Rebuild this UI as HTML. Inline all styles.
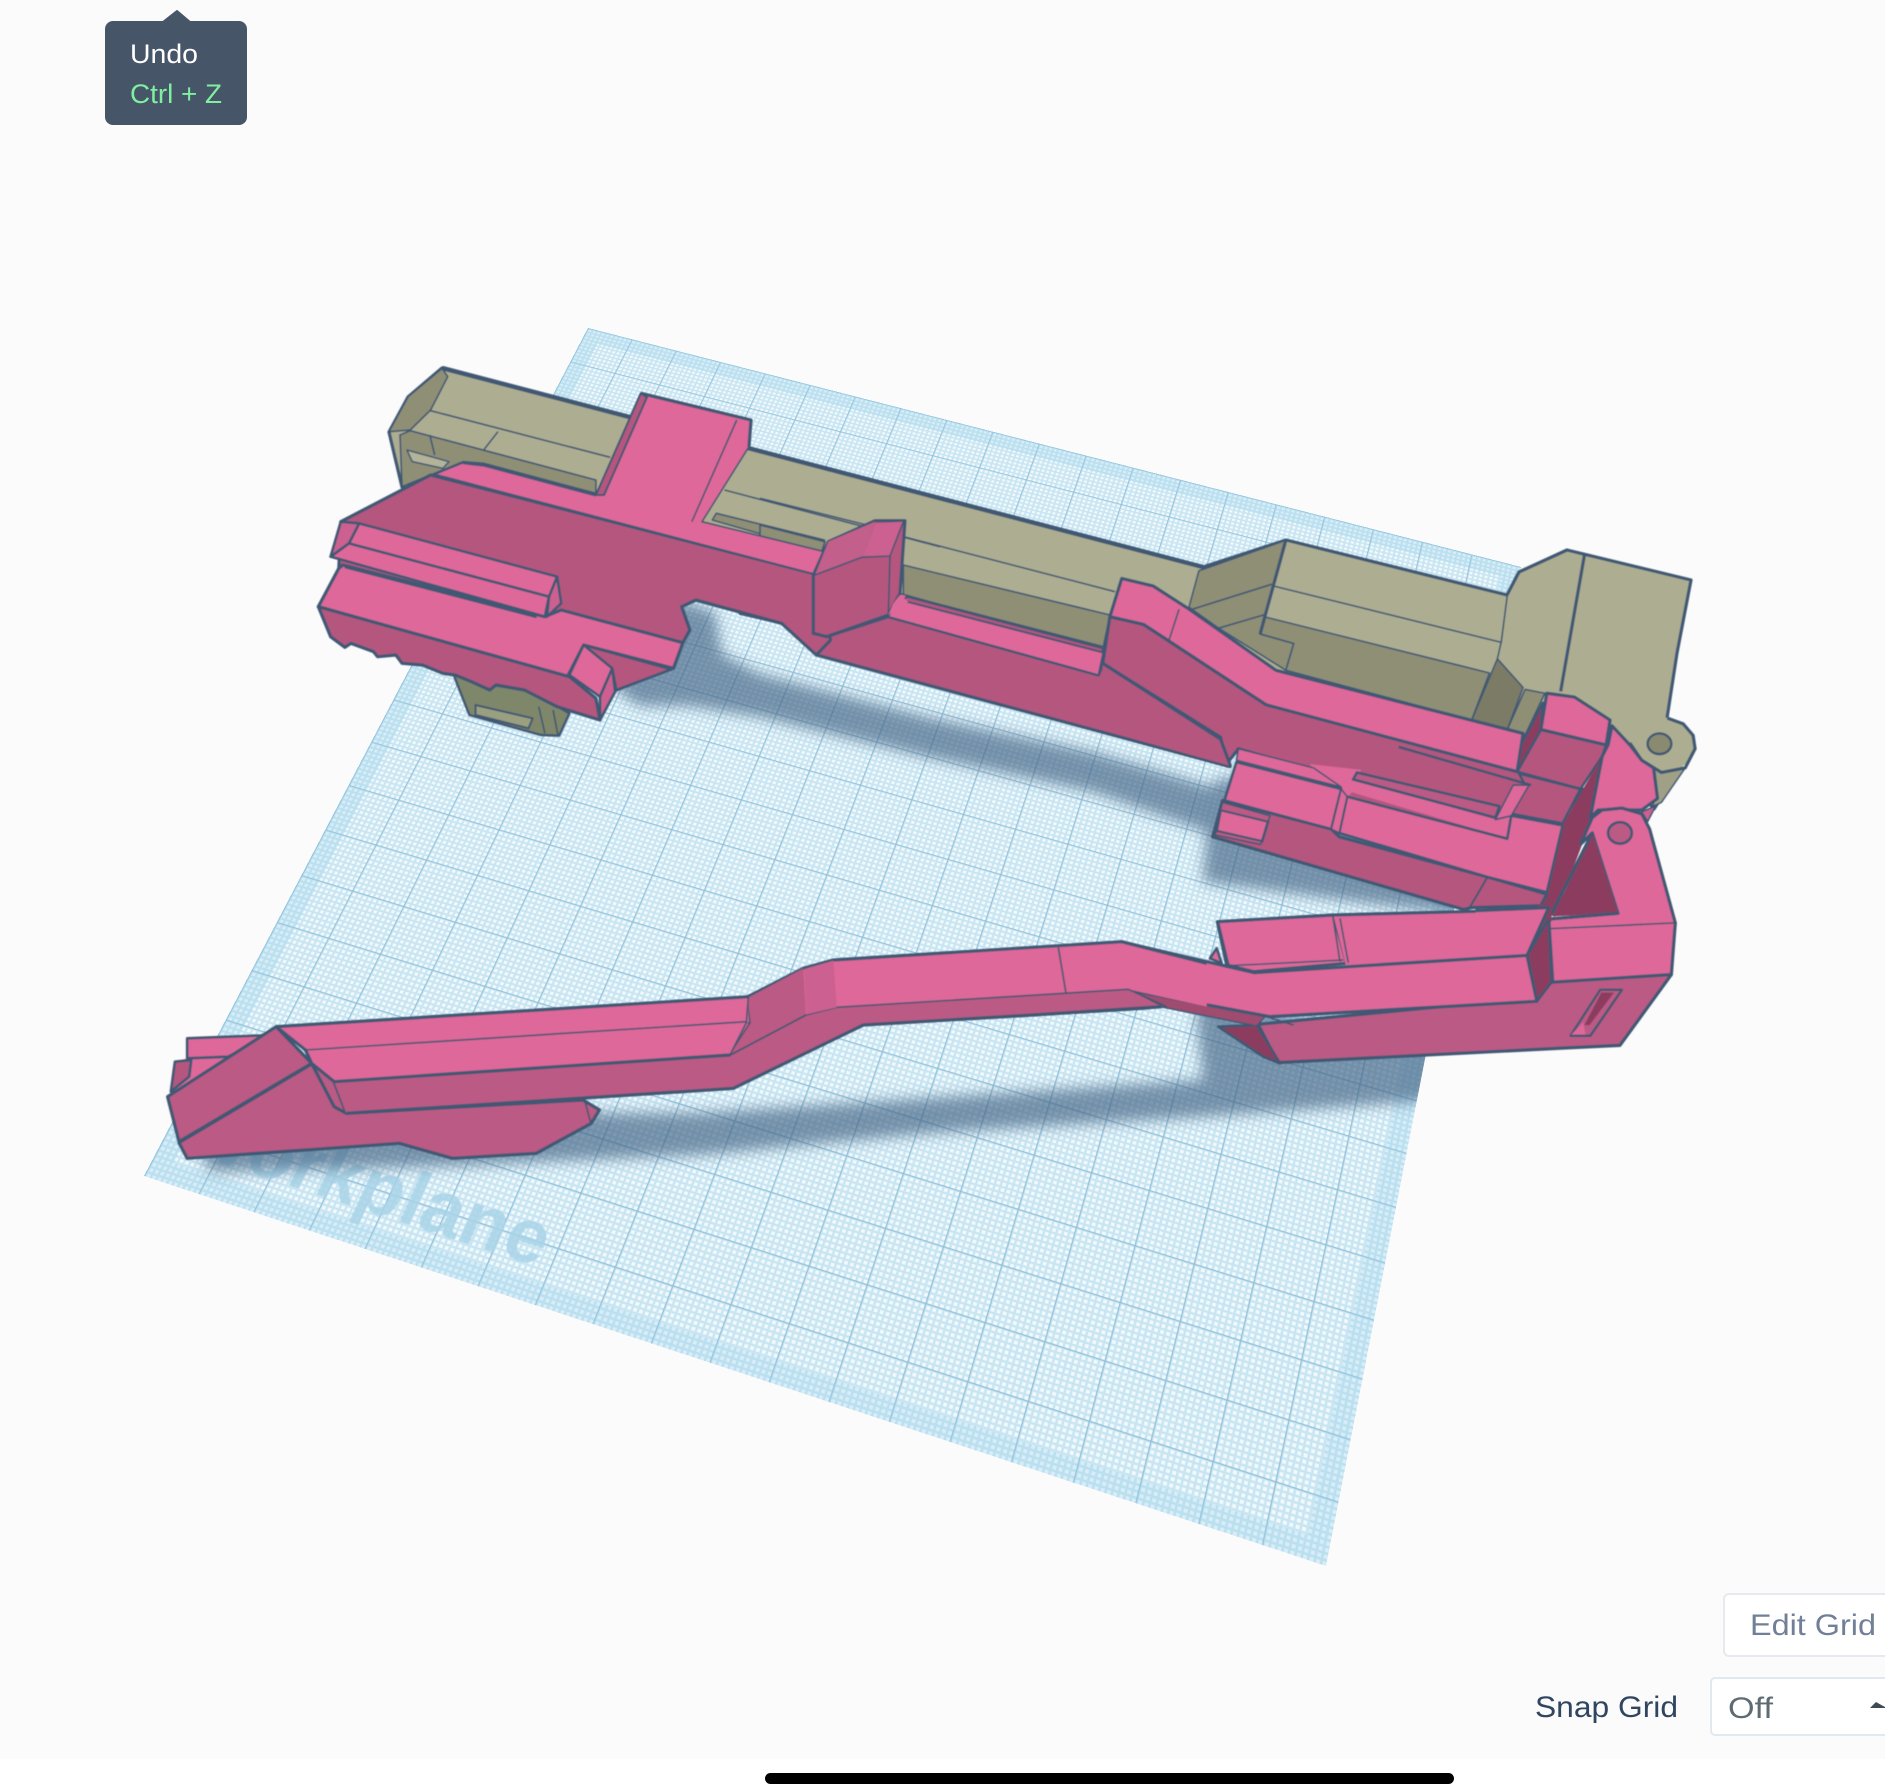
<!DOCTYPE html>
<html>
<head>
<meta charset="utf-8">
<title>Workplane</title>
<style>
html,body{margin:0;padding:0;background:#fff}
#stage{position:relative;width:1885px;height:1788px;overflow:hidden;background:#fff}
#bg{position:absolute;left:0;top:0;width:1885px;height:1759px;background:#fbfbfb}
#plane{position:absolute;left:0;top:0;width:1000px;height:1000px;overflow:hidden;transform-origin:0 0;
transform:matrix3d(.83453,.20229,0,-.00006474,-.47587,.5877,0,-.00022134,0,0,1,0,588,328,0,1);
background-color:#f2f9fc;
background-image:linear-gradient(to right,#8fc0da 1.3px,transparent 1.3px),linear-gradient(to bottom,#8fc0da 1.3px,transparent 1.3px),linear-gradient(to right,#c8e5f2 2.1px,transparent 2.1px),linear-gradient(to bottom,#c8e5f2 2.1px,transparent 2.1px);
background-size:50px 50px,50px 50px,5px 5px,5px 5px;
box-shadow:inset 0 0 0 18px rgba(150,210,235,.28)}
#wp{position:absolute;left:15px;top:908px;font:bold 64px/80px "Liberation Sans",sans-serif;color:#a9d4e8;opacity:.85;white-space:nowrap}
svg{position:absolute;left:0;top:0}
svg polygon,svg polyline,svg line,svg ellipse{vector-effect:non-scaling-stroke;stroke-linejoin:round}
.o{stroke:#3f5873;stroke-width:2.6}
.t{stroke:#3f5873;stroke-width:1.6;fill:none}
.k{stroke:#3f5873;stroke-width:3.2;fill:none}
.n{stroke:none}
.gl{fill:#adad91}.gm{fill:#8f8f76}.gd{fill:#7c7c66}
.pl{fill:#de6899}.pd{fill:#b5567f}.pm{fill:#bb5a84}.pp{fill:#8c3e5e}.pc{fill:#cc6090}
text{font-family:"Liberation Sans",sans-serif}
</style>
</head>
<body>
<div id="stage">
<div id="bg"></div>
<div id="plane"><div id="wp">Workplane</div></div>
<svg width="1885" height="1788" viewBox="0 0 1885 1788" xmlns="http://www.w3.org/2000/svg">
<defs>
<clipPath id="pc"><polygon points="588,328 1521,567 1326,1566 144,1176"/></clipPath>
<filter id="b" x="-10%" y="-20%" width="120%" height="140%"><feGaussianBlur stdDeviation="7"/></filter>
<filter id="s" x="-2%" y="-2%" width="104%" height="104%"><feGaussianBlur stdDeviation=".55"/></filter>
</defs>

<!-- shadows -->
<g clip-path="url(#pc)">
<g filter="url(#b)" fill="#3d5f82" fill-opacity=".64">
<polygon points="680,600 715,612 722,654 760,674 927,717 1093,752 1215,788 1207,832 1093,792 927,757 760,717 688,706 640,706 615,690 640,640"/>
<polygon points="1215,780 1207,826 1203,882 1460,915 1510,830 1300,770"/>
<polygon points="200,1155 212,1172 457,1166 538,1162 700,1155 933,1133 1200,1117 1440,1100 1450,1040 1200,1000 1197,1020 1203,1080 867,1102 700,1113 600,1113 500,1100 200,1100"/>
</g>
</g>

<g filter="url(#s)">
<!-- GOLD BACK BODY -->
<polygon class="gl k" points="442,368 1203,567 1286,540 1507,595 1519,572 1567,550 1691,580 1677,653 1667,718 1660,745 1681,767 1654,809 1630,780 1560,760 1250,680 1000,650 760,600 600,550 402,487 389,432 408,397"/>
<polyline points="442,368 1203,567" style="fill:none;stroke:#3f5873;stroke-width:4.5"/>

<!-- gold lower foot -->
<g transform="translate(300 340) scale(.40816 .33333)">
<polygon points="375,1000 415,1125 590,1185 635,1187 660,1120 560,1050" style="fill:#7f876a;stroke:#3f5873;stroke-width:2.4"/>
<polygon points="430,1095 570,1135 560,1165 430,1125" style="fill:#9a9f80;stroke:#3f5873;stroke-width:2"/>
<line class="t" x1="585" y1="1100" x2="600" y2="1180"/>
<line class="t" x1="620" y1="1110" x2="632" y2="1185"/>
</g>

<!-- gold left details -->
<g transform="translate(300 340) scale(.40816 .33333)">
<polygon class="gm t" points="348,85 362,110 320,210 270,270 218,275 265,170"/>
<polygon class="gm t" points="245,285 270,272 725,420 725,460 450,370 400,365 250,440"/>
<polygon points="262,330 365,365 350,385 275,365" style="fill:#b3b399;stroke:#3f5873;stroke-width:1.5"/>
<line class="t" x1="320" y1="212" x2="760" y2="352"/>
<line class="t" x1="485" y1="275" x2="450" y2="330"/>
<line class="t" x1="318" y1="285" x2="330" y2="345"/>
<line class="t" x1="1040" y1="450" x2="1568" y2="620"/>
<polygon class="gm t" points="1010,540 1020,520 1285,600 1280,635"/>
</g>
<g transform="translate(760 480) scale(.33333)">
<line class="t" x1="0" y1="55" x2="320" y2="135"/>
<line class="t" x1="430" y1="170" x2="1065" y2="335"/>
<polygon class="gm t" points="430,255 1050,405 1030,500 430,345"/>
<polygon class="gm t" points="0,135 195,185 185,215 0,170"/>
</g>
<!-- gold right details -->
<g transform="translate(1100 500) scale(.3954 .3827)">
<polygon class="gm t" points="250,185 470,105 440,220 405,350 490,375 470,445 300,335 225,280"/>
<line class="t" x1="235" y1="285" x2="435" y2="220"/>
<line class="t" x1="300" y1="335" x2="415" y2="300"/>
<polygon class="gm t" points="415,305 985,452 940,575 470,445 490,375 405,350"/>
<line class="t" x1="440" y1="225" x2="1015" y2="372"/>
<polygon class="gd t" points="1005,415 1070,490 1030,600 940,575"/>
<polygon class="gm t" points="1075,495 1125,505 1075,615 1030,600"/>
<polyline class="t" points="1060,185 1030,250 1015,370 1005,415"/>
<line x1="1225" y1="145" x2="1165" y2="500" style="stroke:#3f5873;stroke-width:3.2"/>
<line x1="470" y1="105" x2="405" y2="350" style="stroke:#3f5873;stroke-width:3.2"/>
<polygon points="1400,710 1480,700 1420,790 1400,800" style="fill:#a0a086;stroke:#3f5873;stroke-width:1.5"/>
<ellipse cx="1420" cy="640" rx="85" ry="72" class="gl n"/>
<polyline class="k" points="1435,570 1475,585 1500,615 1505,650 1480,700 1420,712 1370,680 1340,635"/>
<ellipse cx="1415" cy="637" rx="30" ry="27" style="fill:#8a8a70;stroke:#3f5873;stroke-width:2.4"/>
</g>

<!-- PINK FRONT ARM - upper -->
<g transform="translate(760 480) scale(.33333)">
<polygon class="pd k" points="-60,400 -60,240 160,285 160,460 200,470 385,410 1015,585 1030,550 1385,785 1410,860 170,525 70,430"/>
<polygon class="pl t" points="420,340 1030,515 1015,585 385,410"/>
<polygon points="440,350 1028,505 1028,517 430,362" style="fill:#b5567f;stroke:#3f5873;stroke-width:2"/>
<line x1="1030" y1="550" x2="1385" y2="785" style="stroke:#3f5873;stroke-width:3.2"/>
</g>

<g transform="translate(300 340) scale(.40816 .33333)">
<polygon class="pd k" points="100,545 320,405 1262,702 1300,900 1265,945 1180,850 970,780 935,800 955,870 938,908 910,985 775,1050 700,900 300,800 95,690"/>
<!-- T top -->
<polygon class="pl t" points="330,403 400,368 450,375 725,465 835,160 1105,240 1100,320 985,545 1285,635 1260,702"/>
<polygon class="pd" style="stroke:#3f5873;stroke-width:2" points="835,160 725,465 745,465 850,172"/>
<line class="t" x1="1070" y1="240" x2="960" y2="545"/>
<polyline class="k" points="835,160 1105,240 1100,320"/>
<polyline class="k" points="400,368 450,375 725,465"/>
<!-- lower-left light top -->
<polygon class="pl k" points="95,685 45,800 655,1010 695,915 915,985 938,908 640,810 600,830 105,675"/>
<polygon class="pd o" points="765,985 775,1050 910,988 695,915"/>
<polygon class="pd k" points="45,800 75,890 110,922 125,910 180,935 190,950 235,945 250,970 300,975 350,1000 380,1005 420,1025 465,1050 480,1035 550,1050 630,1100 735,1140 725,1075 660,1010"/>
<polygon class="pl o" points="695,915 765,985 735,1070 660,1005"/>
<polygon class="pc o" points="765,985 772,1055 735,1140 735,1070"/>
<!-- rail -->
<polygon class="pl o" points="145,550 630,710 610,790 120,610"/>
<polygon class="pl o" points="120,610 610,770 600,830 75,650"/>
<polygon class="pc o" points="630,710 640,790 605,830 610,770"/>
<polygon class="pc o" points="145,550 100,545 75,650 120,610"/>
<line x1="110" y1="680" x2="580" y2="830" style="stroke:#3f5873;stroke-width:3.2"/>
</g>

<!-- bump block -->
<g transform="translate(760 480) scale(.33333)">
<polygon class="pd k" points="160,285 205,185 345,122 435,122 420,340 385,405 200,470 160,460"/>
<polygon class="pc n" points="345,130 430,125 390,228 310,228"/>
<polygon style="fill:#c25e8a" points="205,185 345,125 310,228 165,285"/>
<polyline class="t" points="165,285 305,232 390,228 430,125"/>
<line class="t" x1="390" y1="228" x2="385" y2="405"/>
<polygon class="pl n" points="420,345 445,365 385,405 400,370"/>
</g>

<!-- rising piece + right block -->
<g transform="translate(1100 500) scale(.3954 .3827)">
<polygon class="pp n" points="1170,845 1270,670 1245,830 1150,1090 1115,1065"/>
<polygon class="pd n" points="590,690 1060,790 1050,910 590,800"/>
<polygon class="pd k" points="25,305 110,325 420,535 1055,705 1220,755 1180,850 1040,820 650,715 620,730 350,650 320,690 305,620 7,427"/>
<polygon class="pd n" points="7,427 305,625 330,695 0,600"/>
<polyline points="7,427 305,625 330,695" style="fill:none;stroke:#3f5873;stroke-width:3.2"/>
<polygon class="pl k" points="55,205 135,225 225,285 445,445 1070,610 1055,710 420,535 110,325 25,305"/>
<line class="t" x1="200" y1="285" x2="175" y2="365"/>
<!-- upper right block -->
<polygon class="pd o" points="1115,600 1280,640 1270,670 1215,755 1055,710"/>
<polygon class="pl k" points="1130,505 1200,515 1290,575 1280,640 1115,600"/>
<polygon class="pp o" points="1120,530 1115,600 1055,710 1065,640"/>
<polygon class="pd o" points="1060,715 1215,755 1170,845 1040,820 1075,745"/>
<polygon class="pp n" points="1270,670 1245,800 1190,900 1195,970 1115,1060 1170,850"/>
<!-- right arm behind -->
<polygon class="pl k" points="1295,590 1340,640 1370,680 1400,700 1410,780 1370,810 1260,810 1240,830 1270,670 1285,640"/>
<polygon class="pc t" points="1370,815 1405,800 1385,840"/>
<!-- lower block tops -->
<polygon class="pd k" points="285,880 310,785 585,860 605,880 980,985 1130,1030 1115,1060 940,1065 920,1070"/>
<polygon class="pl n" points="530,690 660,705 650,745 625,780 600,770"/>
<polygon class="pl o" points="345,685 610,755 585,860 315,785"/>
<polygon class="pl t" points="350,650 540,700 610,750 345,680"/>
<polygon class="pl n" points="625,760 640,730 1000,835 1040,825 1030,885"/>
<polygon class="pl o" points="625,775 1030,885 1040,825 1170,850 1130,1025 980,985 605,870"/>
<polygon class="pl t" points="610,755 625,775 605,870 585,860"/>
<polygon class="pm o" points="640,730 650,712 1010,800 1000,830"/>
<polygon class="pl t" points="1000,835 1045,745 1085,745 1040,825"/>
<line x1="755" y1="645" x2="1090" y2="745" style="stroke:#3f5873;stroke-width:2.6"/>
<polygon class="pl o" points="305,810 425,840 410,892 295,865"/>
<polygon class="pm t" points="290,875 295,865 410,892 405,900"/>
<polygon class="pm t" points="310,790 430,825 425,840 305,810"/>
<line x1="980" y1="985" x2="935" y2="1065" style="stroke:#3f5873;stroke-width:2"/>

<!-- lower bracket -->
<polygon class="pm k" points="1145,1240 1445,1240 1315,1425 1175,1432 450,1470 400,1370 1100,1300"/>
<polygon class="pl k" points="1245,830 1270,810 1320,805 1370,820 1390,860 1455,1105 1445,1240 1145,1260 1135,1095 1310,1080 1245,870 1215,900"/>
<polygon class="pp n" points="1245,870 1310,1080 1145,1088"/>
<line class="t" x1="1140" y1="1120" x2="1455" y2="1105"/>
<line class="k" x1="1135" y1="1095" x2="1310" y2="1080"/>
<line class="k" x1="1245" y1="870" x2="1140" y2="1085"/>
<ellipse cx="1315" cy="870" rx="30" ry="28" class="pm o"/>
<polygon points="1265,1280 1320,1280 1240,1400 1190,1400" style="fill:#bb5a84;stroke:#3f5873;stroke-width:2.4"/>
<polygon class="pp n" points="1268,1287 1300,1287 1238,1372 1225,1372"/>
<polygon class="pl n" points="1192,1397 1222,1365 1228,1397"/>
<polygon class="pp n" points="1110,1058 1142,1058 1142,1100 1080,1190"/>
<polygon class="pp o" points="1135,1095 1080,1190 1105,1310 1142,1260"/>
</g>

<!-- long arm -->
<g transform="translate(1000 780) scale(.33333)">
<polygon class="pp o" points="655,740 770,735 840,850 790,830"/>
<polygon style="fill:#a04b70;stroke:#3f5873;stroke-width:1.5" points="385,630 795,710 770,738 480,680"/>
<polygon class="pl o" points="630,535 650,505 665,550"/>
<polygon class="pl k" points="652,425 1000,405 1040,550 760,575 680,555"/>
<polygon class="pl n" points="1000,405 1500,392 1500,540 1040,565"/>
<line class="t" x1="998" y1="405" x2="1020" y2="545"/>
<line class="t" x1="1020" y1="415" x2="1045" y2="548"/>
<line x1="690" y1="557" x2="1030" y2="540" style="stroke:#3f5873;stroke-width:1.5"/>
<polyline class="k" points="1000,405 1500,392"/>
<line x1="655" y1="430" x2="685" y2="555" style="stroke:#3f5873;stroke-width:2.5"/>
<polygon class="pm k" points="0,655 385,628 480,680 430,685 0,710"/>
</g>
<g transform="translate(1100 500) scale(.3954 .3827)">
<polygon class="pl n" points="950,1070 1135,1065 1080,1190 1060,1205 950,1220"/>
<polyline class="k" points="950,1073 1135,1065 1080,1190"/>
<polygon class="pl k" points="-100,1170 55,1155 390,1235 1080,1190 1105,1310 430,1350 70,1280 -100,1290"/>
<line class="t" x1="420" y1="1350" x2="490" y2="1372"/>
</g>
<g transform="translate(700 900) scale(.33333)">
<polygon class="pm n" points="0,475 85,468 318,345 410,322 1285,268 1385,320 1000,345 490,375 100,565 0,570"/>
<polyline class="k" points="1385,320 1000,345 490,375 100,565 0,570"/>
<polygon class="pl n" points="0,305 140,292 310,205 400,180 1265,125 1520,190 1520,320 1285,268 410,322 318,345 85,468 0,475"/>
<polyline class="k" points="0,305 140,292 310,205 400,180 1265,125 1520,190"/>
<polyline class="t" points="0,475 85,468 318,345 410,322 1285,268 1400,320"/>
<polygon class="pm n" points="140,295 310,205 318,345 85,468 150,368"/>
<polyline class="t" points="140,295 150,368 85,468 318,345"/>
<polygon class="pc n" points="313,207 400,182 410,322 320,343"/>
<line class="t" x1="0" y1="378" x2="150" y2="368"/>
<line class="t" x1="1075" y1="142" x2="1098" y2="280"/>
</g>
<!-- tail -->
<g transform="translate(130 960) scale(.40816 .33333)">
<polygon class="pl n" points="140,240 330,225 110,400 110,305 140,295"/>
<polygon class="pm k" points="120,548 445,312 500,430 530,460 1110,420 1150,450 1130,490 995,580 790,595 660,550 140,595"/>
<line class="t" x1="1115" y1="425" x2="1128" y2="485"/>
<polygon class="pl o" points="140,235 350,225 240,290 140,295"/>
<polygon class="pd o" points="110,305 150,300 145,350 100,395"/>
<polygon class="pl n" points="152,315 230,295 150,355"/>
<polygon class="pm k" points="92,410 358,200 445,310 120,545"/>
<polygon class="pm k" points="430,270 500,365 530,460 500,440 445,310"/>
<polygon class="pm n" points="500,365 1470,285 1480,385 530,460"/>
<polyline class="k" points="530,460 1480,385"/>
<polyline class="t" points="500,365 1470,285"/>
<polygon class="pl n" points="358,200 1515,110 1515,185 1470,285 500,365 445,310 430,270"/>
<polyline class="k" points="358,200 1515,110"/>
<polyline class="t" points="1515,110 1510,188 1470,285"/>
<polyline class="k" points="358,200 430,270 445,310 500,365 1470,285"/>
<line class="t" x1="430" y1="270" x2="1510" y2="185"/>
</g>
</g>

<!-- tooltip -->
<polygon points="163,22 177,11 190,22" fill="#475569" stroke="#475569" stroke-width="2" stroke-linejoin="round"/>
<rect x="105" y="21" width="142" height="104" rx="8" fill="#475569"/>
<text x="130" y="63" font-size="27" fill="#ffffff" textLength="68" lengthAdjust="spacingAndGlyphs">Undo</text>
<text x="130" y="103" font-size="27" fill="#7ff0a0" textLength="92" lengthAdjust="spacingAndGlyphs">Ctrl + Z</text>

<!-- controls -->
<rect x="1724" y="1594" width="175" height="62" rx="5" fill="#ffffff" stroke="#e6e9ee" stroke-width="2"/>
<text x="1750" y="1635" font-size="30" fill="#718096" textLength="126" lengthAdjust="spacingAndGlyphs">Edit Grid</text>
<text x="1535" y="1717" font-size="30" fill="#2f4560" textLength="143" lengthAdjust="spacingAndGlyphs">Snap Grid</text>
<rect x="1711" y="1678" width="190" height="57" rx="4" fill="#ffffff" stroke="#e2e8f0" stroke-width="2"/>
<text x="1728" y="1718" font-size="30" fill="#5f6b73" textLength="45" lengthAdjust="spacingAndGlyphs">Off</text>
<polygon points="1876,1702 1870,1708 1885,1708 1885,1707" fill="#3f4a55"/>

<!-- home indicator -->
<rect x="765" y="1773" width="689" height="11" rx="5.5" fill="#000000"/>
</svg>
</div>
</body>
</html>
